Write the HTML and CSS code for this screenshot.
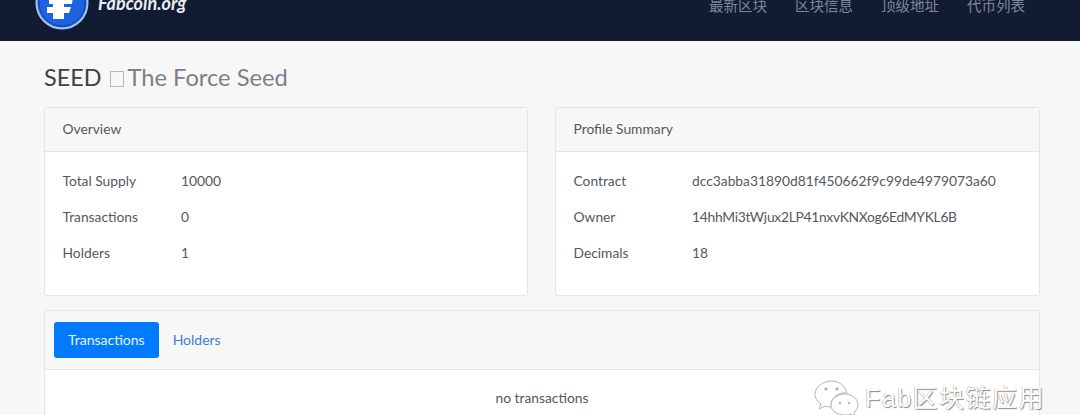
FILE: index.html
```html
<!DOCTYPE html>
<html lang="en">
<head>
<meta charset="utf-8">
<title>SEED - The Force Seed</title>
<link rel="stylesheet" href="styles.css">
</head>
<body>
<header class="navbar">
  <a class="brand">
    <svg class="logo" width="54" height="54" viewBox="0 0 54 54">
      <circle cx="27" cy="27" r="25.500" fill="#1f62e0" stroke="#a9c4f5" stroke-width="2"/>
      <circle cx="27" cy="27" r="23" fill="#1f62e0" stroke="#153a94" stroke-width="0.800"/>
      <path d="M14 14H39L37 28H29V31H36L34 37H29V43H18V37H12V31H18V28H14Z" fill="#fff"/>
    </svg>
    <span class="brand-name">Fabcoin.org</span>
  </a>
  <nav class="nav-links">
    <a>最新区块</a>
    <a>区块信息</a>
    <a>顶级地址</a>
    <a>代币列表</a>
  </nav>
</header>
<main class="content">
  <h1 class="title">SEED <small class="subtitle"><span class="tofu"></span>The Force Seed</small></h1>
  <div class="cards">
    <section class="card">
      <div class="card-header">Overview</div>
      <dl class="card-body">
        <div class="row"><dt>Total Supply</dt><dd>10000</dd></div>
        <div class="row"><dt>Transactions</dt><dd>0</dd></div>
        <div class="row"><dt>Holders</dt><dd>1</dd></div>
      </dl>
    </section>
    <section class="card">
      <div class="card-header">Profile Summary</div>
      <dl class="card-body">
        <div class="row"><dt>Contract</dt><dd>dcc3abba31890d81f450662f9c99de4979073a60</dd></div>
        <div class="row"><dt>Owner</dt><dd class="address">14hhMi3tWjux2LP41nxvKNXog6EdMYKL6B</dd></div>
        <div class="row"><dt>Decimals</dt><dd>18</dd></div>
      </dl>
    </section>
  </div>
  <section class="card tabs-card">
    <div class="tabs">
      <a class="tab active">Transactions</a>
      <a class="tab">Holders</a>
    </div>
    <p class="empty">no transactions</p>
  </section>
</main>
<div class="watermark">
  <svg width="46" height="38" viewBox="0 0 46 38" fill="#fff" stroke="#b4b4b4" stroke-width="1">
    <path d="M19 2C10 2 2 8 2 15C2 19 4 22 8 25L6 30L12 27C14 28 16 28 18 28C17 19 25 13 34 14C32 7 26 2 19 2Z"/>
    <path d="M32 15C24 15 18 20 18 26C18 32 24 36 32 36C34 36 35 36 37 35L42 37L41 33C44 31 45 29 45 26C45 20 39 15 32 15Z"/>
    <circle cx="13" cy="10" r="1.200" fill="#b4b4b4"/>
    <circle cx="24" cy="10" r="1.200" fill="#b4b4b4"/>
    <circle cx="27" cy="24" r="0.900" fill="#b4b4b4"/>
    <circle cx="36" cy="24" r="0.900" fill="#b4b4b4"/>
  </svg>
  <span class="watermark-text">Fab区块链应用</span>
</div>
</body>
</html>
```
FILE: styles.css
```css
* { box-sizing: border-box; }
html, body { margin: 0; height: 415px; overflow: hidden; }
body {
  background: #f7f7f7;
  color: #54585d;
  font-family: "Lato", "Noto Sans CJK SC", sans-serif;
  font-size: 13.800px;
  position: relative;
}
.navbar {
  height: 42px;
  background: #111c33;
  border-bottom: 1px solid #f2f5fb;
  display: flex;
  justify-content: space-between;
  overflow: hidden;
  padding: 0 55px 0 35px;
}
.brand { display: flex; gap: 9px; margin-top: -24px; align-items: flex-start; }
.logo { flex: none; }
.brand-name {
  color: #e9edf3;
  font-size: 18px;
  font-weight: 700;
  font-style: italic;
  margin-top: 16px;
}
.nav-links {
  display: flex;
  gap: 28px;
  margin-top: -6px;
  color: #7f8794;
  font-size: 14.500px;
}
.content { padding: 19px 40px 0 44px; }
.title {
  margin: 0;
  font-size: 23.400px;
  font-weight: 400;
  line-height: 32px;
  color: #3d4248;
  height: 46px;
}
.subtitle { font-size: 23.700px; color: #7a8087; margin-left: 3px; }
.tofu {
  display: inline-block;
  width: 14px;
  height: 16px;
  border: 1px solid #b5b9bd;
  vertical-align: -1px;
  margin-right: 3px;
}
.cards { display: grid; grid-template-columns: 484px 485px; gap: 27px; }
.card {
  background: #fff;
  border: 1px solid #e3e5e7;
  border-radius: 3px;
  height: 189px;
}
.card-header {
  height: 44px;
  background: #f7f7f7;
  border-bottom: 1px solid #e3e5e7;
  padding: 0 17.500px 2px;
  line-height: 42px;
}
.card-body { margin: 0; padding: 10px 17.500px 0; }
.row { display: flex; height: 36px; align-items: center; }
dt { width: 118.500px; flex: none; }
dd { margin: 0; }
.address { letter-spacing: -0.270px; }
.tabs-card { margin-top: 14px; height: 110px; overflow: hidden; }
.tabs {
  height: 59px;
  background: #f7f7f7;
  border-bottom: 1px solid #e3e5e7;
  padding: 11px 9px;
  display: flex;
}
.tab { height: 36px; line-height: 36px; padding: 0 14px; color: #3b7fd9; border-radius: 3px; font-size: 14px; }
.active { background: #007bff; color: #e8f2ff; }
.empty { margin: 19px 0 0; text-align: center; }
.watermark {
  position: absolute;
  left: 813px;
  top: 378px;
  display: flex;
  gap: 6px;
  align-items: center;
}
.watermark-text {
  font-family: "Liberation Sans", "Noto Sans CJK SC", sans-serif;
  font-size: 25px;
  color: #fff;
  letter-spacing: 1.500px;
  margin-bottom: 4px;
  text-shadow: 1px 1px 1px #8a8a8a, -0.500px -0.500px 0 #b0b0b0;
}
```
